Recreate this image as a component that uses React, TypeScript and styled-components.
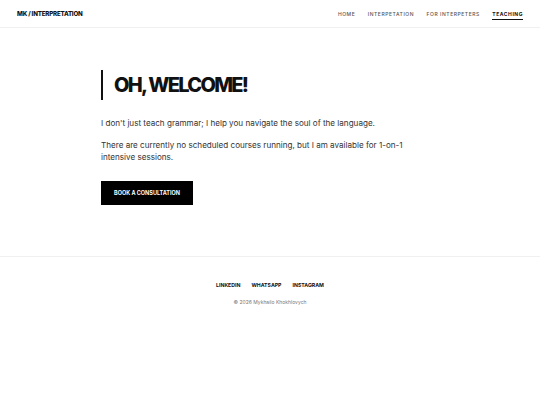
import styled, { createGlobalStyle } from "styled-components";

const GlobalStyle = createGlobalStyle`
  * { box-sizing: border-box; }
  html, body { margin: 0; padding: 0; background: #fff; }
  body {
    font-family: Inter, "Liberation Sans", sans-serif;
    color: #111;
    -webkit-font-smoothing: antialiased;
  }
`;

const Header = styled.header`
  height: 28px;
  display: flex;
  align-items: center;
  justify-content: space-between;
  padding: 0 17px;
  border-bottom: 1px solid #f0f0f0;
`;

const Logo = styled.div`
  font-size: 6.2px;
  font-weight: 800;
  letter-spacing: -0.2px;
  color: #111;
`;

const Nav = styled.nav`
  display: flex;
  gap: 12.5px;
  align-items: center;
`;

const NavLink = styled.a<{ $active?: boolean }>`
  font-size: 5px;
  font-weight: ${(p) => (p.$active ? 700 : 500)};
  letter-spacing: 0.55px;
  color: ${(p) => (p.$active ? "#111" : "#555")};
  text-decoration: none;
  padding: 3px 0 2px;
  border-bottom: 1px solid ${(p) => (p.$active ? "#111" : "transparent")};
`;

const Main = styled.main`
  width: 338px;
  margin: 0 auto;
  padding: 42px 0 51px;
`;

const Title = styled.h1`
  margin: 0 0 17px;
  padding: 5px 0 5px 11px;
  border-left: 2px solid #111;
  font-size: 20px;
  font-weight: 800;
  letter-spacing: -1.7px;
  line-height: 20px;
  color: #111;
`;

const Text = styled.p`
  margin: 0 0 10px;
  max-width: 305px;
  font-size: 8.1px;
  line-height: 12px;
  color: #333;
`;

const Button = styled.button`
  margin-top: 8px;
  width: 92px;
  height: 24px;
  border: none;
  background: #000;
  color: #fff;
  font-family: inherit;
  font-size: 5.5px;
  font-weight: 700;
  letter-spacing: 0;
  cursor: pointer;
`;

const Footer = styled.footer`
  border-top: 1px solid #f0f0f0;
  padding: 25px 0 40px;
  display: flex;
  flex-direction: column;
  align-items: center;
  gap: 11px;
`;

const FooterLinks = styled.div`
  display: flex;
  gap: 11px;
`;

const FooterLink = styled.a`
  font-size: 5.2px;
  font-weight: 700;
  color: #111;
  text-decoration: none;
`;

const Copy = styled.div`
  font-size: 5px;
  color: #777;
`;

export default function App() {
  return (
    <>
      <GlobalStyle />
      <Header>
        <Logo>MK / INTERPRETATION</Logo>
        <Nav>
          <NavLink>HOME</NavLink>
          <NavLink>INTERPETATION</NavLink>
          <NavLink>FOR INTERPETERS</NavLink>
          <NavLink $active>TEACHING</NavLink>
        </Nav>
      </Header>
      <Main>
        <Title>OH, WELCOME!</Title>
        <Text>I don't just teach grammar; I help you navigate the soul of the language.</Text>
        <Text>
          There are currently no scheduled courses running, but I am available for 1-on-1
          intensive sessions.
        </Text>
        <Button>BOOK A CONSULTATION</Button>
      </Main>
      <Footer>
        <FooterLinks>
          <FooterLink>LINKEDIN</FooterLink>
          <FooterLink>WHATSAPP</FooterLink>
          <FooterLink>INSTAGRAM</FooterLink>
        </FooterLinks>
        <Copy>© 2026 Mykhailo Khokhlovych</Copy>
      </Footer>
    </>
  );
}
